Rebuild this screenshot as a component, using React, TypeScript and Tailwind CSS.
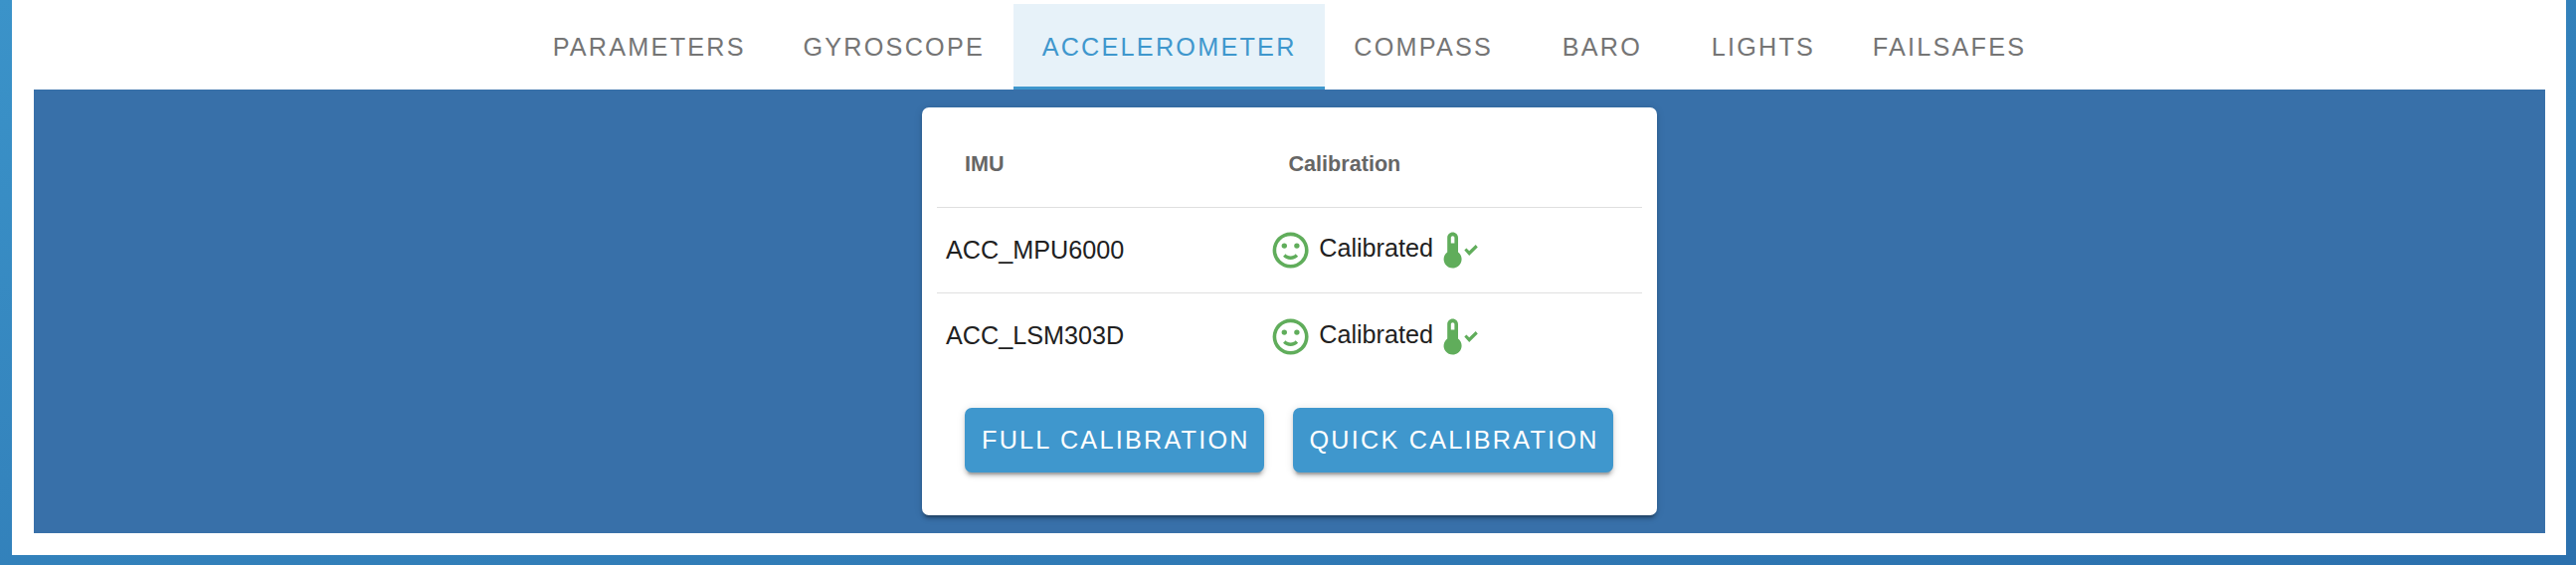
const FACE =
  "M20 12A8 8 0 1 0 12 20A8 8 0 0 0 20 12M22 12A10 10 0 1 1 12 2A10 10 0 0 1 22 12M10 9.5A1.5 1.5 0 1 1 8.5 8A1.5 1.5 0 0 1 10 9.5M17 9.5A1.5 1.5 0 1 1 15.5 8A1.5 1.5 0 0 1 17 9.5M12 17.23C10.25 17.23 8.71 16.5 7.81 15.42L9.23 14C9.68 14.72 10.75 15.23 12 15.23S14.32 14.72 14.77 14L16.19 15.42C15.29 16.5 13.75 17.23 12 17.23Z";
const THERMOMETER_CHECK =
  "M16.25 15L13.5 12L14.66 10.84L16.25 12.43L19.84 8.84L21 10.25L16.25 15M10 13V5C10 3.34 8.66 2 7 2S4 3.34 4 5V13C1.79 14.66 1.34 17.79 3 20S7.79 22.66 10 21 12.66 16.21 11 14C10.72 13.62 10.38 13.28 10 13M7 4C7.55 4 8 4.45 8 5V8H6V5C6 4.45 6.45 4 7 4Z";

const TABS = ["Parameters", "Gyroscope", "Accelerometer", "Compass", "Baro", "Lights", "Failsafes"];
const IMUS = [
  { name: "ACC_MPU6000", row: "h-[86px]", cell: "border-t border-[#dfdfdf] pl-[9px]" },
  { name: "ACC_LSM303D", row: "h-[88px]", cell: "border-t border-[#dfdfdf] pl-[9px] pb-[2px]" },
];

function Icon({ path }: { path: string }) {
  return (
    <svg viewBox="0 0 24 24" className="size-[43.2px] shrink-0 fill-[#60ad5b]">
      <path d={path} />
    </svg>
  );
}

function Tab({ label, active }: { label: string; active: boolean }) {
  return (
    <button
      className={
        active
          ? "flex min-w-[162px] items-center justify-center border-b-3 border-[#3f97cd] bg-[#e7f2f9] px-[28.8px] pt-[5px] uppercase tracking-[2.25px] text-[#3f97cd]"
          : "flex min-w-[162px] items-center justify-center px-[28.8px] pt-[2px] uppercase tracking-[2.25px] text-[#757575]"
      }
    >
      {label}
    </button>
  );
}

function ActionButton({ label, size }: { label: string; size: string }) {
  return (
    <button
      className={`${size} h-[65px] rounded-[7px] bg-[#3f97cd] text-left whitespace-nowrap uppercase tracking-[2.25px] text-white shadow-[0_5.4px_1.8px_-3.6px_rgba(0,0,0,0.2),0_3.6px_3.6px_0_rgba(0,0,0,0.14),0_1.8px_9px_0_rgba(0,0,0,0.12)]`}
    >
      {label}
    </button>
  );
}

export default function App() {
  return (
    <div className="h-[568px] w-[2590px] overflow-hidden bg-linear-to-br from-[#3b93c9] to-[#2b70ad] pr-[10px] pb-[10px] pl-[12px] font-['Liberation_Sans',Arial,sans-serif] text-[25.2px] leading-none">
      <main className="flex h-full flex-col bg-white pt-[4px] pr-[21px] pb-[22px] pl-[22px]">
        <nav className="flex h-[86px] shrink-0 justify-center">
          {TABS.map((t) => (
            <Tab key={t} label={t} active={t === "Accelerometer"} />
          ))}
        </nav>
        <section className="flex flex-1 items-start justify-center bg-[#3870a9] pt-[18px]">
          <div className="h-[410px] w-[739px] rounded-[7px] bg-white px-[15px] pt-[14px] shadow-[0_5.4px_1.8px_-3.6px_rgba(0,0,0,0.2),0_3.6px_3.6px_0_rgba(0,0,0,0.14),0_1.8px_9px_0_rgba(0,0,0,0.12)]">
            <table className="w-full table-fixed border-separate border-spacing-0 text-left text-[#212121]">
              <thead>
                <tr className="h-[86px] text-[21.6px] text-[#666666]">
                  <th className="w-[324px] pb-[1px] pl-[28px] font-bold">IMU</th>
                  <th className="pb-[1px] pl-[29.5px] font-bold">Calibration</th>
                </tr>
              </thead>
              <tbody>
                {IMUS.map(({ name, row, cell }) => (
                  <tr key={name} className={row}>
                    <td className={cell}>{name}</td>
                    <td className="border-t border-[#dfdfdf] pl-[10px]">
                      <div className="flex items-center gap-[7px]">
                        <Icon path={FACE} />
                        <span className="pb-[3px]">Calibrated</span>
                        <Icon path={THERMOMETER_CHECK} />
                      </div>
                    </td>
                  </tr>
                ))}
              </tbody>
            </table>
            <div className="flex gap-[29px] pt-[28px] pl-[28px]">
              <ActionButton label="Full Calibration" size="w-[301px] pl-[17px]" />
              <ActionButton label="Quick Calibration" size="w-[322px] pl-[16.5px]" />
            </div>
          </div>
        </section>
      </main>
    </div>
  );
}
